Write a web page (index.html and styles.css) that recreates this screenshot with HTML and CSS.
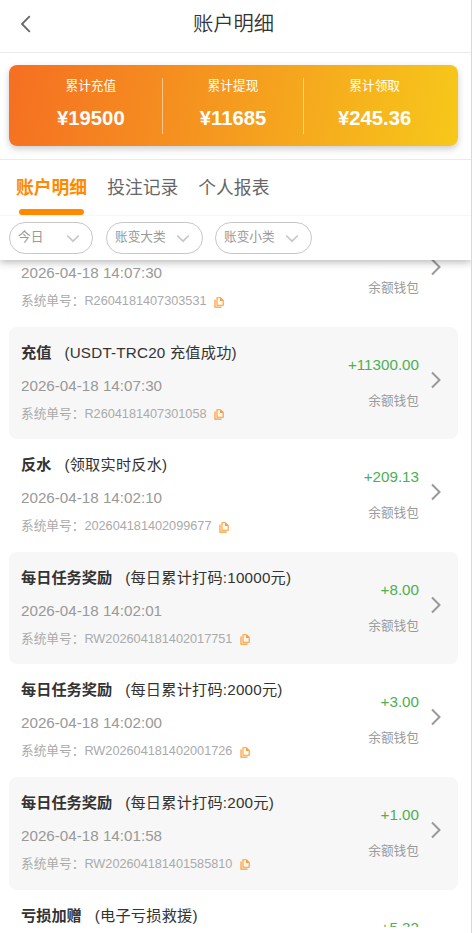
FILE: index.html
```html
<!DOCTYPE html>
<html lang="zh-CN">
<head>
    <meta charset="UTF-8">
    <meta name="viewport" content="width=device-width, initial-scale=1.0">
    <title>账户明细</title>
    <link rel="stylesheet" href="styles.css">
</head>
<body>
    <!-- Shared icons -->
    <svg class="sprite" width="0" height="0">
        <symbol id="icon-right" viewBox="0 0 12 18">
            <path d="M2 1.5L9.5 9L2 16.5" fill="none" stroke="currentColor" stroke-width="2"/>
        </symbol>
        <symbol id="icon-down" viewBox="0 0 14 9">
            <path d="M1.2 1.5L7 7.2L12.8 1.5" fill="none" stroke="currentColor" stroke-width="1.7"/>
        </symbol>
        <symbol id="icon-copy" viewBox="0 0 10 11">
            <path d="M3 .7H6.4L9.2 3.5V8.2H3Z" fill="none" stroke="currentColor" stroke-width="1.1"/>
            <path d="M6 .7V4H9.2Z" fill="currentColor"/>
            <path d="M1 2.6V10.2H7.6" fill="none" stroke="currentColor" stroke-width="1.2"/>
        </symbol>
    </svg>

    <div class="app">
        <div class="top">
            <header class="navbar">
                <svg class="back" width="12" height="18" viewBox="0 0 12 18"><path d="M9.8 1.2L2 9L9.8 16.8" fill="none" stroke="currentColor" stroke-width="1.8"/></svg>
                <h1>账户明细</h1>
            </header>

            <section class="summary">
                <div class="summary-card">
                    <div class="stat"><span>累计充值</span><strong>¥19500</strong></div>
                    <div class="stat"><span>累计提现</span><strong>¥11685</strong></div>
                    <div class="stat"><span>累计领取</span><strong>¥245.36</strong></div>
                </div>
            </section>

            <nav class="tabs">
                <a class="tab active">账户明细</a>
                <a class="tab">投注记录</a>
                <a class="tab">个人报表</a>
            </nav>

            <div class="filters">
                <div class="filter filter-date">今日<svg width="14" height="9"><use href="#icon-down"/></svg></div>
                <div class="filter">账变大类<svg width="14" height="9"><use href="#icon-down"/></svg></div>
                <div class="filter">账变小类<svg width="14" height="9"><use href="#icon-down"/></svg></div>
            </div>
        </div>

        <main class="list">
            <div class="item">
                <div class="info">
                    <p class="title"><b>充值</b><span>(USDT-TRC20 充值成功)</span></p>
                    <p class="time">2026-04-18 14:07:30</p>
                    <p class="serial">系统单号：R2604181407303531<svg class="copy"><use href="#icon-copy"/></svg></p>
                </div>
                <div class="money"><p class="amount">+226.00</p><p class="wallet">余额钱包</p></div>
                <svg class="arrow"><use href="#icon-right"/></svg>
            </div>
            <div class="item">
                <div class="info">
                    <p class="title"><b>充值</b><span>(USDT-TRC20 充值成功)</span></p>
                    <p class="time">2026-04-18 14:07:30</p>
                    <p class="serial">系统单号：R2604181407301058<svg class="copy"><use href="#icon-copy"/></svg></p>
                </div>
                <div class="money"><p class="amount">+11300.00</p><p class="wallet">余额钱包</p></div>
                <svg class="arrow"><use href="#icon-right"/></svg>
            </div>
            <div class="item">
                <div class="info">
                    <p class="title"><b>反水</b><span>(领取实时反水)</span></p>
                    <p class="time">2026-04-18 14:02:10</p>
                    <p class="serial">系统单号：202604181402099677<svg class="copy"><use href="#icon-copy"/></svg></p>
                </div>
                <div class="money"><p class="amount">+209.13</p><p class="wallet">余额钱包</p></div>
                <svg class="arrow"><use href="#icon-right"/></svg>
            </div>
            <div class="item">
                <div class="info">
                    <p class="title"><b>每日任务奖励</b><span>(每日累计打码:10000元)</span></p>
                    <p class="time">2026-04-18 14:02:01</p>
                    <p class="serial">系统单号：RW202604181402017751<svg class="copy"><use href="#icon-copy"/></svg></p>
                </div>
                <div class="money"><p class="amount">+8.00</p><p class="wallet">余额钱包</p></div>
                <svg class="arrow"><use href="#icon-right"/></svg>
            </div>
            <div class="item">
                <div class="info">
                    <p class="title"><b>每日任务奖励</b><span>(每日累计打码:2000元)</span></p>
                    <p class="time">2026-04-18 14:02:00</p>
                    <p class="serial">系统单号：RW202604181402001726<svg class="copy"><use href="#icon-copy"/></svg></p>
                </div>
                <div class="money"><p class="amount">+3.00</p><p class="wallet">余额钱包</p></div>
                <svg class="arrow"><use href="#icon-right"/></svg>
            </div>
            <div class="item">
                <div class="info">
                    <p class="title"><b>每日任务奖励</b><span>(每日累计打码:200元)</span></p>
                    <p class="time">2026-04-18 14:01:58</p>
                    <p class="serial">系统单号：RW202604181401585810<svg class="copy"><use href="#icon-copy"/></svg></p>
                </div>
                <div class="money"><p class="amount">+1.00</p><p class="wallet">余额钱包</p></div>
                <svg class="arrow"><use href="#icon-right"/></svg>
            </div>
            <div class="item">
                <div class="info">
                    <p class="title"><b>亏损加赠</b><span>(电子亏损救援)</span></p>
                </div>
                <div class="money"><p class="amount">+5.32</p></div>
            </div>
        </main>
    </div>
</body>
</html>
```
FILE: styles.css
```css
* {
    box-sizing: border-box;
}

body {
    margin: 0;
    background: #fff;
    color: #333;
    font-family: "Liberation Sans", "Noto Sans CJK SC", sans-serif;
}

h1, p {
    margin: 0;
}

.sprite {
    display: none;
}

.app {
    display: flex;
    flex-direction: column;
    width: 472px;
    height: 933px;
    padding-bottom: 6px;
    overflow: hidden;
    border-right: 1px solid #d8d8d8;
}

.top {
    position: relative;
    z-index: 1;
    flex: none;
    height: 260px;
    background: #fff;
    box-shadow: 0 2px 8px rgba(0, 0, 0, 0.3);
}

.navbar {
    display: grid;
    grid-template-columns: 40px 1fr 40px;
    align-items: center;
    height: 53px;
    padding: 0 4px 4px 0;
    border-bottom: 1px solid #ebebeb;
}

.navbar h1 {
    font-size: 20.3px;
    font-weight: 350;
    line-height: 28px;
    text-align: center;
}

.back {
    margin-left: 20px;
    color: #666;
}

.summary {
    height: 107px;
    padding: 12px 13px 0 9px;
    border-bottom: 1px solid #ebebeb;
}

.summary-card {
    display: grid;
    grid-template-columns: repeat(3, 1fr);
    height: 81px;
    padding: 13px 13px 12px 11px;
    border-radius: 8px;
    background: linear-gradient(100deg, #f56f22, #f59b1f 50%, #f7c81a);
    box-shadow: 0 3px 7px rgba(0, 0, 0, 0.2);
}

.stat {
    display: flex;
    flex-direction: column;
    align-items: center;
    color: #fff;
}

.stat + .stat {
    border-left: 1px solid rgba(255, 255, 255, 0.5);
}

.stat span {
    font-size: 12.7px;
    line-height: 16px;
}

.stat strong {
    margin-top: 12px;
    font-size: 20.3px;
    line-height: 24px;
}

.tabs {
    display: flex;
    gap: 20px;
    height: 56px;
    padding-left: 16px;
    border-bottom: 1px solid #f6f6f6;
}

.tab {
    display: flex;
    flex-direction: column;
    align-items: center;
    justify-content: space-between;
    padding-top: 15px;
    color: #666;
    font-size: 17.8px;
    line-height: 26px;
}

.tab.active {
    color: #ff8a00;
    font-weight: bold;
}

.tab.active::after {
    content: "";
    width: 65px;
    height: 6px;
    border-radius: 3px;
    background: #ff8a00;
}

.filters {
    display: flex;
    gap: 12px;
    padding: 6px 9px;
}

.filter {
    display: flex;
    justify-content: space-between;
    width: 97px;
    height: 32px;
    padding: 5px 12px 0 8px;
    border: 1px solid #c8c8c8;
    border-radius: 16px;
    color: #999;
    font-size: 12.7px;
    line-height: 18px;
}

.filter-date {
    width: 84px;
    margin-right: 1px;
}

.filter svg {
    margin-top: 6px;
    color: #c8c8c8;
}

/* The list is scrolled a little, its first item runs under the top bar */
.list {
    flex: 1;
    min-height: 0;
    margin-top: -46px;
    padding: 0 13px 0 9px;
    overflow: hidden;
}

.item {
    display: flex;
    height: 112.6px;
    padding: 12px 16px 0 12px;
    border-radius: 8px;
}

.item:nth-child(even) {
    background: #f7f7f7;
}

.info {
    flex: 1;
}

.title {
    font-size: 15.2px;
    line-height: 28px;
}

.title b {
    margin-right: 13px;
}

.title span {
    letter-spacing: 0.22px;
}

.time {
    margin-top: 7px;
    color: #999;
    font-size: 15.2px;
    line-height: 24px;
}

.serial {
    display: flex;
    align-items: center;
    margin-top: 6px;
    color: #aaa;
    font-size: 12.7px;
    line-height: 20px;
}

.copy {
    width: 10px;
    height: 11px;
    margin: 2px 0 0 7.5px;
    color: #ff9a2e;
}

.money {
    padding-top: 15px;
    text-align: right;
}

.amount {
    color: #4caf50;
    font-size: 15.2px;
    line-height: 22px;
}

.wallet {
    margin-top: 15px;
    color: #999;
    font-size: 12.7px;
    line-height: 20px;
}

.arrow {
    width: 12px;
    height: 18px;
    margin: 32px 0 0 11px;
    color: #999;
}

.item:last-child {
    padding-right: 39px;
}
```
